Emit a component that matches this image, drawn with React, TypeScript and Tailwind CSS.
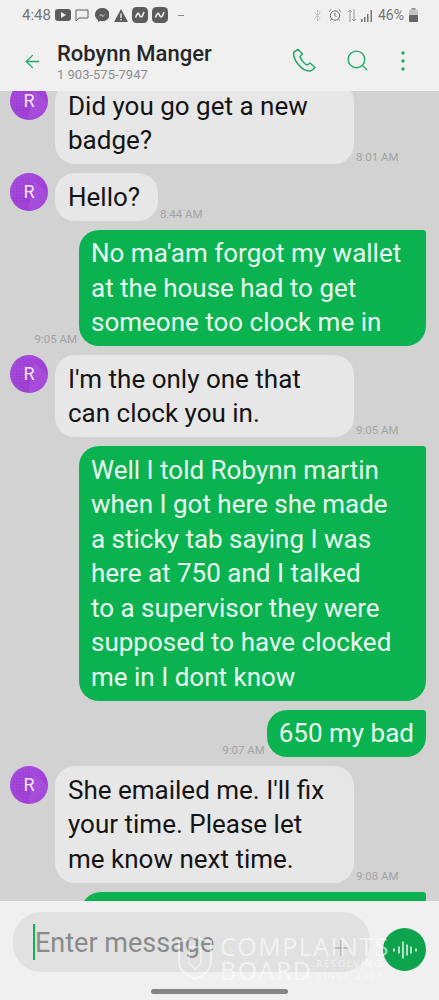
import { ArrowLeft, Bluetooth, AlarmClock, Search, Plus } from 'lucide-react';

function Avatar() {
  return (
    <div className="relative w-[38px] h-[38px] rounded-full bg-gradient-to-br from-[#a94ee0] to-[#9a38cf] shrink-0 flex items-center justify-center overflow-hidden">
      <svg className="absolute inset-0" width="38" height="38" viewBox="0 0 38 38">
        <defs>
          <pattern id="dots" width="3" height="3" patternUnits="userSpaceOnUse">
            <rect width="1.5" height="1.5" fill="#7c2bb0" opacity="0.35" />
          </pattern>
        </defs>
        <rect x="0" y="4" width="20" height="26" fill="url(#dots)" />
        <path d="M24 8L38 20V38H18z" fill="#b565e6" opacity="0.35" />
      </svg>
      <span className="relative text-[#f3e8fa] text-[18px] leading-none">R</span>
    </div>
  );
}

function Incoming({ lines, time, width }: { lines: string[]; time: string; width: string }) {
  return (
    <div className="flex items-start pl-[10px]">
      <Avatar />
      <div className={`ml-[7px] bg-[#e7e7e7] rounded-[20px] pl-[13px] py-[6.5px] text-[26px] leading-[34.5px] text-[#141414] shrink-0 ${width}`}>
        {lines.map((l) => (
          <div key={l} className="whitespace-nowrap">{l}</div>
        ))}
      </div>
      <span className="self-end ml-[2px] text-[11.5px] leading-[14px] text-[#a3a3a3] whitespace-nowrap">{time}</span>
    </div>
  );
}

function Outgoing({ lines, time, width }: { lines: string[]; time?: string; width: string }) {
  return (
    <div className="flex items-end justify-end pr-[13px]">
      {time && <span className="mr-[2px] text-[11.5px] leading-[14px] text-[#a3a3a3] whitespace-nowrap">{time}</span>}
      <div className={`bg-[#0ab350] rounded-[20px] rounded-tr-[3px] px-[12px] py-[6.5px] text-[26px] leading-[34.5px] text-[#e9fbf0] ${width}`}>
        {lines.map((l) => (
          <div key={l} className="whitespace-nowrap">{l}</div>
        ))}
      </div>
    </div>
  );
}

function NewsIcon() {
  return (
    <svg width="16" height="16" viewBox="0 0 16 16">
      <rect width="16" height="16" rx="4.5" fill="#5c5c5c" />
      <path d="M3.500 10.500C4.500 8 5.500 6 6.500 6.500S7.500 10 9 10s2-2.500 3-5" fill="none" stroke="#f0f0f0" strokeWidth="1.6" />
    </svg>
  );
}

export default function App() {
  return (
    <div className="w-[439px] h-[1000px] flex flex-col overflow-hidden bg-[#d2d2d2] font-['Roboto',sans-serif]">
      {/* top bars */}
      <div className="bg-[#f0f0f0] h-[91px] shrink-0 relative z-10">
        <div className="flex items-center justify-between h-[30px] pl-[22px] pr-[21px] text-[#757575]">
          <div className="flex items-center">
            <span className="text-[15px]">4:48</span>
            <div className="flex items-center gap-[4px] ml-[4px]">
              <svg width="16" height="12" viewBox="0 0 16 12"><rect width="16" height="12" rx="3" fill="#5c5c5c" /><path d="M6 3l5 3-5 3z" fill="#f0f0f0" /></svg>
              <svg width="14" height="13" viewBox="0 0 14 13" fill="none" stroke="#5c5c5c" strokeWidth="1"><path d="M1 1h12v8H4l-3 3z" /></svg>
              <svg className="ml-[2px]" width="14" height="14" viewBox="0 0 14 14"><path d="M7 0a7 6.600 0 0 0-4 12v2l2.200-1.200A7 6.600 0 1 0 7 0z" fill="#5c5c5c" /><path d="M3 9l3-3 2 2 3-3-3 4-2-2z" fill="#f0f0f0" /></svg>
              <svg className="ml-[1px]" width="14" height="13" viewBox="0 0 14 13"><path d="M7 0l7 13H0z" fill="#5c5c5c" /><rect x="6.300" y="4.500" width="1.400" height="4.500" fill="#f0f0f0" /><rect x="6.300" y="10" width="1.400" height="1.400" fill="#f0f0f0" /></svg>
              <NewsIcon />
              <NewsIcon />
            </div>
            <div className="w-[6px] h-px bg-[#888] ml-[10px]" />
          </div>
          <div className="flex items-center">
            <Bluetooth size={13} strokeWidth={1.5} className="text-[#b8b8b8]" />
            <AlarmClock size={14} strokeWidth={1.6} className="text-[#666] ml-[4px]" />
            <svg className="ml-[5px]" width="10" height="15" viewBox="0 0 10 15" fill="none" stroke="#999" strokeWidth="1"><path d="M3 14V2M1 4l2-2 2 2M7 1v12M5 11l2 2 2-2" /></svg>
            <svg className="ml-[3px]" width="13" height="13" viewBox="0 0 13 13"><path d="M1 13v-3h1.500v3zM4 13V8h1.500v5zM7 13V5h1.500v8zM10.500 13V1H12v12z" fill="#777" /></svg>
            <span className="text-[14px] ml-[5px]">46%</span>
            <svg className="ml-[5px]" width="9" height="14" viewBox="0 0 9 14"><rect x="2.500" width="4" height="2" fill="#8a8a8a" /><rect y="1.500" width="9" height="12.500" rx="1" fill="#c4c4c4" /><rect y="7" width="9" height="7" rx="1" fill="#666" /></svg>
          </div>
        </div>
        <div className="flex items-center pl-[22px] pr-[33px] h-[60px]">
          <ArrowLeft size={21} strokeWidth={1.5} className="text-[#1fa868] shrink-0 mt-[3px]" />
          <div className="ml-[14px] flex-1 mt-[3px]">
            <div className="text-[22px] leading-[26px] font-medium text-[#262626]">Robynn Manger</div>
            <div className="text-[13px] leading-[15px] text-[#8c8c8c]">1 903-575-7947</div>
          </div>
          <svg className="mr-[28px] mt-[1px]" width="25" height="25" viewBox="0 0 25 25" fill="none" stroke="#1fa868" strokeWidth="1.500" strokeLinejoin="round">
            <path d="M6 1.500 2 4c-1 3 1 8 4 12s8 7 12 7c1.500 0 3-1.500 5-3.500l-5-4.500-3 2c-2-.500-6-5-7-8.500l2.500-2.500z" />
          </svg>
          <Search size={25} strokeWidth={1.3} className="text-[#1fa868] mr-[30px] mt-[1px]" />
          <svg className="mt-[1px]" width="6" height="22" viewBox="0 0 6 22" fill="#1fa868">
            <circle cx="3" cy="3" r="1.700" /><circle cx="3" cy="11" r="1.700" /><circle cx="3" cy="19" r="1.700" />
          </svg>
        </div>
      </div>

      {/* messages */}
      <div className="flex-1 min-h-0 overflow-hidden flex flex-col gap-[9px]">
        <div className="-mt-[9px]">
          <Incoming lines={['Did you go get a new', 'badge?']} time="8:01 AM" width="w-[299px]" />
        </div>
        <Incoming lines={['Hello?']} time="8:44 AM" width="w-[103px]" />
        <Outgoing lines={["No ma'am forgot my wallet", 'at the house had to get', 'someone too clock me in']} time="9:05 AM" width="w-[347px]" />
        <Incoming lines={["I'm the only one that", 'can clock you in.']} time="9:05 AM" width="w-[299px]" />
        <Outgoing lines={['Well I told Robynn martin', 'when I got here she made', 'a sticky tab saying I was', 'here at 750 and I talked', 'to a supervisor they were', 'supposed to have clocked', 'me in I dont know']} width="w-[347px]" />
        <Outgoing lines={['650 my bad']} time="9:07 AM" width="" />
        <Incoming lines={["She emailed me. I'll fix", 'your time. Please let', 'me know next time.']} time="9:08 AM" width="w-[299px]" />
        <div className="flex justify-end pr-[13px]">
          <div className="w-[345px] h-[48px] bg-[#0ab350] rounded-[20px] rounded-tr-[3px] shrink-0" />
        </div>
      </div>

      {/* input */}
      <div className="relative bg-[#f0f0f0] h-[99px] shrink-0 pt-[11px] pl-[13px]">
        <div className="flex items-start gap-[13px]">
          <div className="w-[357px] h-[60px] rounded-[28px] bg-[#e1e1e1] flex items-center pl-[20px] pr-[16px]">
            <div className="w-[1.5px] h-[36px] bg-[#0ab350]" />
            <span className="text-[27px] text-[#8a8a8a] flex-1 ml-[0.5px] mt-[3px]">Enter message</span>
            <Plus size={26} strokeWidth={0.8} className="text-[#8a8a8a] mt-[12px]" />
          </div>
          <div className="w-[43px] h-[43px] mt-[16px] rounded-full bg-[#0ea34d] flex items-center justify-center">
            <svg width="26" height="20" viewBox="0 0 26 20" stroke="#e8f6ec" strokeWidth="1.5" strokeLinecap="round"><path d="M2 9v2M7 7v6M11 2v16M15 5v10M19 7v6M24 9v2" /></svg>
          </div>
        </div>
        {/* watermark */}
        <div className="absolute left-[178px] top-[33px] flex items-center text-white/60 pointer-events-none font-['Open_Sans',sans-serif]">
          <svg className="mr-[8px]" width="34" height="44" viewBox="0 0 34 44" fill="none" stroke="white" strokeOpacity="0.5" strokeWidth="2">
            <path d="M1 5c5 0 11-2 16-4 5 2 11 4 16 4v20c0 10-8 15-16 18C9 40 1 35 1 25z" />
            <path d="M11 11h12v14c0 4-3 6-6 8-3-2-6-4-6-8z" strokeWidth="1.500" />
          </svg>
          <div className="text-[25px] leading-[24px] tracking-[1.5px]">
            <div>COMPLAINTS</div>
            <div className="flex items-center">BOARD<span className="ml-[4px] text-[9px] leading-[12px] tracking-[2px]">RESOLVING<br />SINCE 2001</span></div>
          </div>
        </div>
        <div className="absolute bottom-[6px] left-[151px] w-[137px] h-[5px] rounded-full bg-[#858585]" />
      </div>
    </div>
  );
}
